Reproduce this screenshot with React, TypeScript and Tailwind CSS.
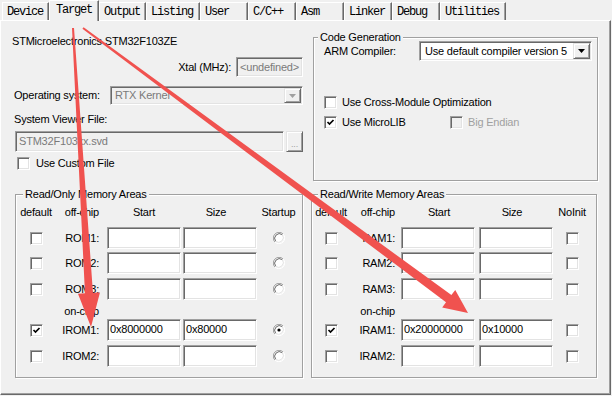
import React from 'react';

const sunken =
  'border border-t-[#a0a0a0] border-l-[#a0a0a0] border-b-white border-r-white shadow-[inset_1px_1px_0_#696969,inset_-1px_-1px_0_#e3e3e3]';
const raised =
  'border border-t-[#e3e3e3] border-l-[#e3e3e3] border-b-[#696969] border-r-[#696969] shadow-[inset_1px_1px_0_#fff,inset_-1px_-1px_0_#a0a0a0]';
const etched = 'border border-[#a0a0a0] shadow-[inset_1px_1px_0_#fff,1px_1px_0_#fff]';

const tabs = [
  { label: 'Device', w: 47 },
  { label: 'Target', w: 50, active: true },
  { label: 'Output', w: 47 },
  { label: 'Listing', w: 54 },
  { label: 'User', w: 48 },
  { label: 'C/C++', w: 48 },
  { label: 'Asm', w: 48 },
  { label: 'Linker', w: 48 },
  { label: 'Debug', w: 48 },
  { label: 'Utilities', w: 66 },
];

function Check({ checked = false, disabled = false }: { checked?: boolean; disabled?: boolean }) {
  return (
    <div className={`${sunken} flex h-[13px] w-[13px] shrink-0 items-center justify-center ${disabled ? 'bg-[#f0f0f0]' : 'bg-white'}`}>
      {checked && (
        <svg width="9" height="9" viewBox="0 0 9 9">
          <path d="M1.5 4 L3.5 6 L7.5 2" stroke="#000" strokeWidth="1.7" fill="none" />
        </svg>
      )}
    </div>
  );
}

function Radio({ on = false }: { on?: boolean }) {
  return (
    <svg width="12" height="12" viewBox="0 0 12 12">
      <circle cx="6" cy="6" r="5" fill="#fff" />
      <path d="M1.9 10.1 A5.8 5.8 0 0 1 10.1 1.9" stroke="#a0a0a0" fill="none" />
      <path d="M10.1 1.9 A5.8 5.8 0 0 1 1.9 10.1" stroke="#fff" fill="none" />
      <path d="M2.7 9.3 A4.7 4.7 0 0 1 9.3 2.7" stroke="#696969" fill="none" />
      <path d="M9.3 2.7 A4.7 4.7 0 0 1 2.7 9.3" stroke="#e3e3e3" fill="none" />
      {on && <circle cx="6" cy="6" r="1.6" fill="#000" />}
    </svg>
  );
}

function DropButton({ disabled = false }: { disabled?: boolean }) {
  return (
    <div className={`${raised} flex h-full w-[17px] items-center justify-center bg-[#f0f0f0]`}>
      <svg width="7" height="4" viewBox="0 0 7 4">
        <path d="M0 0 H7 L3.5 4 Z" fill={disabled ? '#a0a0a0' : '#000'} />
      </svg>
    </div>
  );
}

function Group({ title, titleLeft, className, children }: { title: string; titleLeft: string; className: string; children: React.ReactNode }) {
  return (
    <div className={`relative ${etched} ${className}`}>
      <span className={`absolute top-[-8px] ${titleLeft} bg-[#f0f0f0] px-[2px] leading-[14px]`}>{title}</span>
      {children}
    </div>
  );
}

function Field({ value = '', w }: { value?: string; w: string }) {
  return (
    <div className={`${sunken} ${w} h-[22px] bg-white pl-[2px] pt-[2px] leading-[14px] text-black`}>{value}</div>
  );
}

type Row = { label: string; on?: boolean; start?: string; size?: string };

function MemTable({ rows, onchip, wide, last }: { rows: Row[]; onchip: Row[]; wide: boolean; last: string }) {
  const c1 = wide ? 'w-[40px]' : 'w-[38px]';
  const c2 = wide ? 'w-[51px] pr-[8px]' : 'w-[51px] pr-[6px]';
  const c3 = wide ? 'w-[76px]' : 'w-[78px]';
  const c5 = wide ? 'w-[43px]' : 'w-[38px]';
  const line = (r: Row, mt: string) => (
    <div key={r.label} className={`flex h-[22px] items-center ${mt}`}>
      <div className={`${c1} flex justify-center`}>
        <Check checked={r.on} />
      </div>
      <div className={`${c2} text-right`}>{r.label}</div>
      <div className={c3}>
        <Field w="w-[74px]" value={r.start} />
      </div>
      <div className="w-[74px]">
        <Field w="w-[74px]" value={r.size} />
      </div>
      <div className={`${c5} flex justify-center`}>{wide ? <Radio on={r.on} /> : <Check />}</div>
    </div>
  );
  return (
    <div className="flex flex-col">
      <div className="mt-[10px] flex h-[14px] items-center leading-[14px]">
        <div className={`${c1} text-center`}>default</div>
        <div className={`${c2} text-right`}>off-chip</div>
        <div className={`${c3} pr-[2px] text-center`}>Start</div>
        <div className="w-[74px] pr-[8px] text-center">Size</div>
        <div className={`${c5} text-center`}>{last}</div>
      </div>
      {line(rows[0], 'mt-[8px]')}
      {line(rows[1], 'mt-[3px]')}
      {line(rows[2], 'mt-[4px]')}
      <div className="mt-[4px] flex h-[14px] leading-[14px]">
        <div className={c1} />
        <div className={`${c2} text-right`}>on-chip</div>
      </div>
      {line(onchip[0], 'mt-[1px]')}
      {line(onchip[1], 'mt-[4px]')}
    </div>
  );
}

export default function App() {
  return (
    <div className="relative h-[396px] w-[612px] overflow-hidden bg-[#f0f0f0] font-['Liberation_Sans',Arial,sans-serif] text-[11px] tracking-[-0.2px] text-black">
      {/* tab strip */}
      <div className="flex h-[20px] items-end pl-[2px] font-['Liberation_Mono','Courier_New',monospace] text-[12px] tracking-[-1.2px]">
        {tabs.map((t) =>
          t.active ? (
            <div
              key={t.label}
              style={{ width: t.w }}
              className="relative z-10 mb-[-1px] h-[21px] border-l border-r border-t border-l-white border-r-[#696969] border-t-white bg-[#f0f0f0] pl-[6px] pt-[1px] leading-[17px] shadow-[inset_-1px_0_0_#a0a0a0]"
            >
              {t.label}
            </div>
          ) : (
            <div
              key={t.label}
              style={{ width: t.w }}
              className="h-[18px] border-l border-r border-t border-l-white border-r-[#696969] border-t-white bg-[#f0f0f0] pl-[4px] pt-[1px] leading-[17px] shadow-[inset_-1px_0_0_#a0a0a0]"
            >
              {t.label}
            </div>
          )
        )}
      </div>

      {/* tab page */}
      <div className="h-[375px] w-[611px] border border-b-[#696969] border-l-white border-r-[#696969] border-t-white shadow-[inset_-1px_-1px_0_#a0a0a0]">
        <div className="flex h-[173px]">
          {/* device */}
          <div className="flex w-[302px] flex-col">
            <div className="ml-[11px] mt-[13px] h-[14px] leading-[14px]">STMicroelectronics STM32F103ZE</div>
            <div className="mt-[9px] flex h-[20px] items-center justify-end gap-[5px]">
              <span>Xtal (MHz):</span>
              <div className={`${sunken} flex h-[20px] w-[67px] items-center bg-[#f0f0f0] pl-[3px] text-[#7a7a7a]`}>&lt;undefined&gt;</div>
            </div>
            <div className="ml-[13px] mt-[9px] flex h-[19px] items-center">
              <span className="w-[96px]">Operating system:</span>
              <div className={`${sunken} flex h-[19px] w-[193px] items-center bg-[#f0f0f0] p-[1px] pl-[4px] text-[#7a7a7a]`}>
                <span className="flex-1">RTX Kernel</span>
                <DropButton disabled />
              </div>
            </div>
            <div className="ml-[13px] mt-[7px] h-[14px] leading-[14px]">System Viewer File:</div>
            <div className="ml-[14px] mt-[5px] flex h-[21px] gap-[2px]">
              <div className={`${sunken} flex w-[269px] items-center bg-[#f0f0f0] pl-[3px] text-[#7a7a7a]`}>STM32F103xx.svd</div>
              <div className={`${raised} flex w-[17px] items-end justify-center bg-[#f0f0f0] pb-[2px] text-[9px] leading-[9px] text-[#a0a0a0]`}>...</div>
            </div>
            <div className="ml-[16px] mt-[5px] flex h-[13px] items-center gap-[6px]">
              <Check />
              <span>Use Custom File</span>
            </div>
          </div>

          {/* code generation */}
          <Group title="Code Generation" titleLeft="left-[4px]" className="ml-[10px] mt-[16px] h-[144px] w-[285px]">
            <div className="ml-[10px] mt-[3px] flex h-[20px] items-center">
              <span className="w-[95px]">ARM Compiler:</span>
              <div className={`${sunken} flex h-[20px] w-[173px] items-center bg-white p-[1px] pl-[5px]`}>
                <span className="flex-1">Use default compiler version 5</span>
                <DropButton />
              </div>
            </div>
            <div className="ml-[10px] mt-[35px] flex h-[13px] items-center gap-[5px]">
              <Check />
              <span>Use Cross-Module Optimization</span>
            </div>
            <div className="ml-[10px] mt-[7px] flex h-[13px] items-center">
              <div className="flex w-[126px] items-center gap-[5px]">
                <Check checked />
                <span>Use MicroLIB</span>
              </div>
              <div className="flex items-center gap-[5px] text-[#a0a0a0]">
                <Check disabled />
                <span>Big Endian</span>
              </div>
            </div>
          </Group>
        </div>

        <div className="flex">
          <Group title="Read/Only Memory Areas" titleLeft="left-[7px]" className="ml-[14px] h-[184px] w-[288px]">
            <MemTable
              wide
              last="Startup"
              rows={[{ label: 'ROM1:' }, { label: 'ROM2:' }, { label: 'ROM3:' }]}
              onchip={[{ label: 'IROM1:', on: true, start: '0x8000000', size: '0x80000' }, { label: 'IROM2:' }]}
            />
          </Group>
          <Group title="Read/Write Memory Areas" titleLeft="left-[6px]" className="ml-[8px] h-[184px] w-[286px]">
            <MemTable
              wide={false}
              last="NoInit"
              rows={[{ label: 'RAM1:' }, { label: 'RAM2:' }, { label: 'RAM3:' }]}
              onchip={[{ label: 'IRAM1:', on: true, start: '0x20000000', size: '0x10000' }, { label: 'IRAM2:' }]}
            />
          </Group>
        </div>
      </div>

      {/* annotation arrows drawn over the dialog */}
      <svg className="pointer-events-none absolute left-0 top-0" width="612" height="396" viewBox="0 0 612 396">
        <polygon
          fill="#f0524f"
          points="72,28.06 84.97,293.3 77.98,293.72 91,327 99.94,292.4 92.95,292.82 74,27.94"
        />
        <polygon
          fill="#f0524f"
          points="82.41,28.8 446.03,302.34 442.17,307.56 468,313 455.26,289.88 451.39,295.1 83.6,27.2"
        />
      </svg>
    </div>
  );
}
